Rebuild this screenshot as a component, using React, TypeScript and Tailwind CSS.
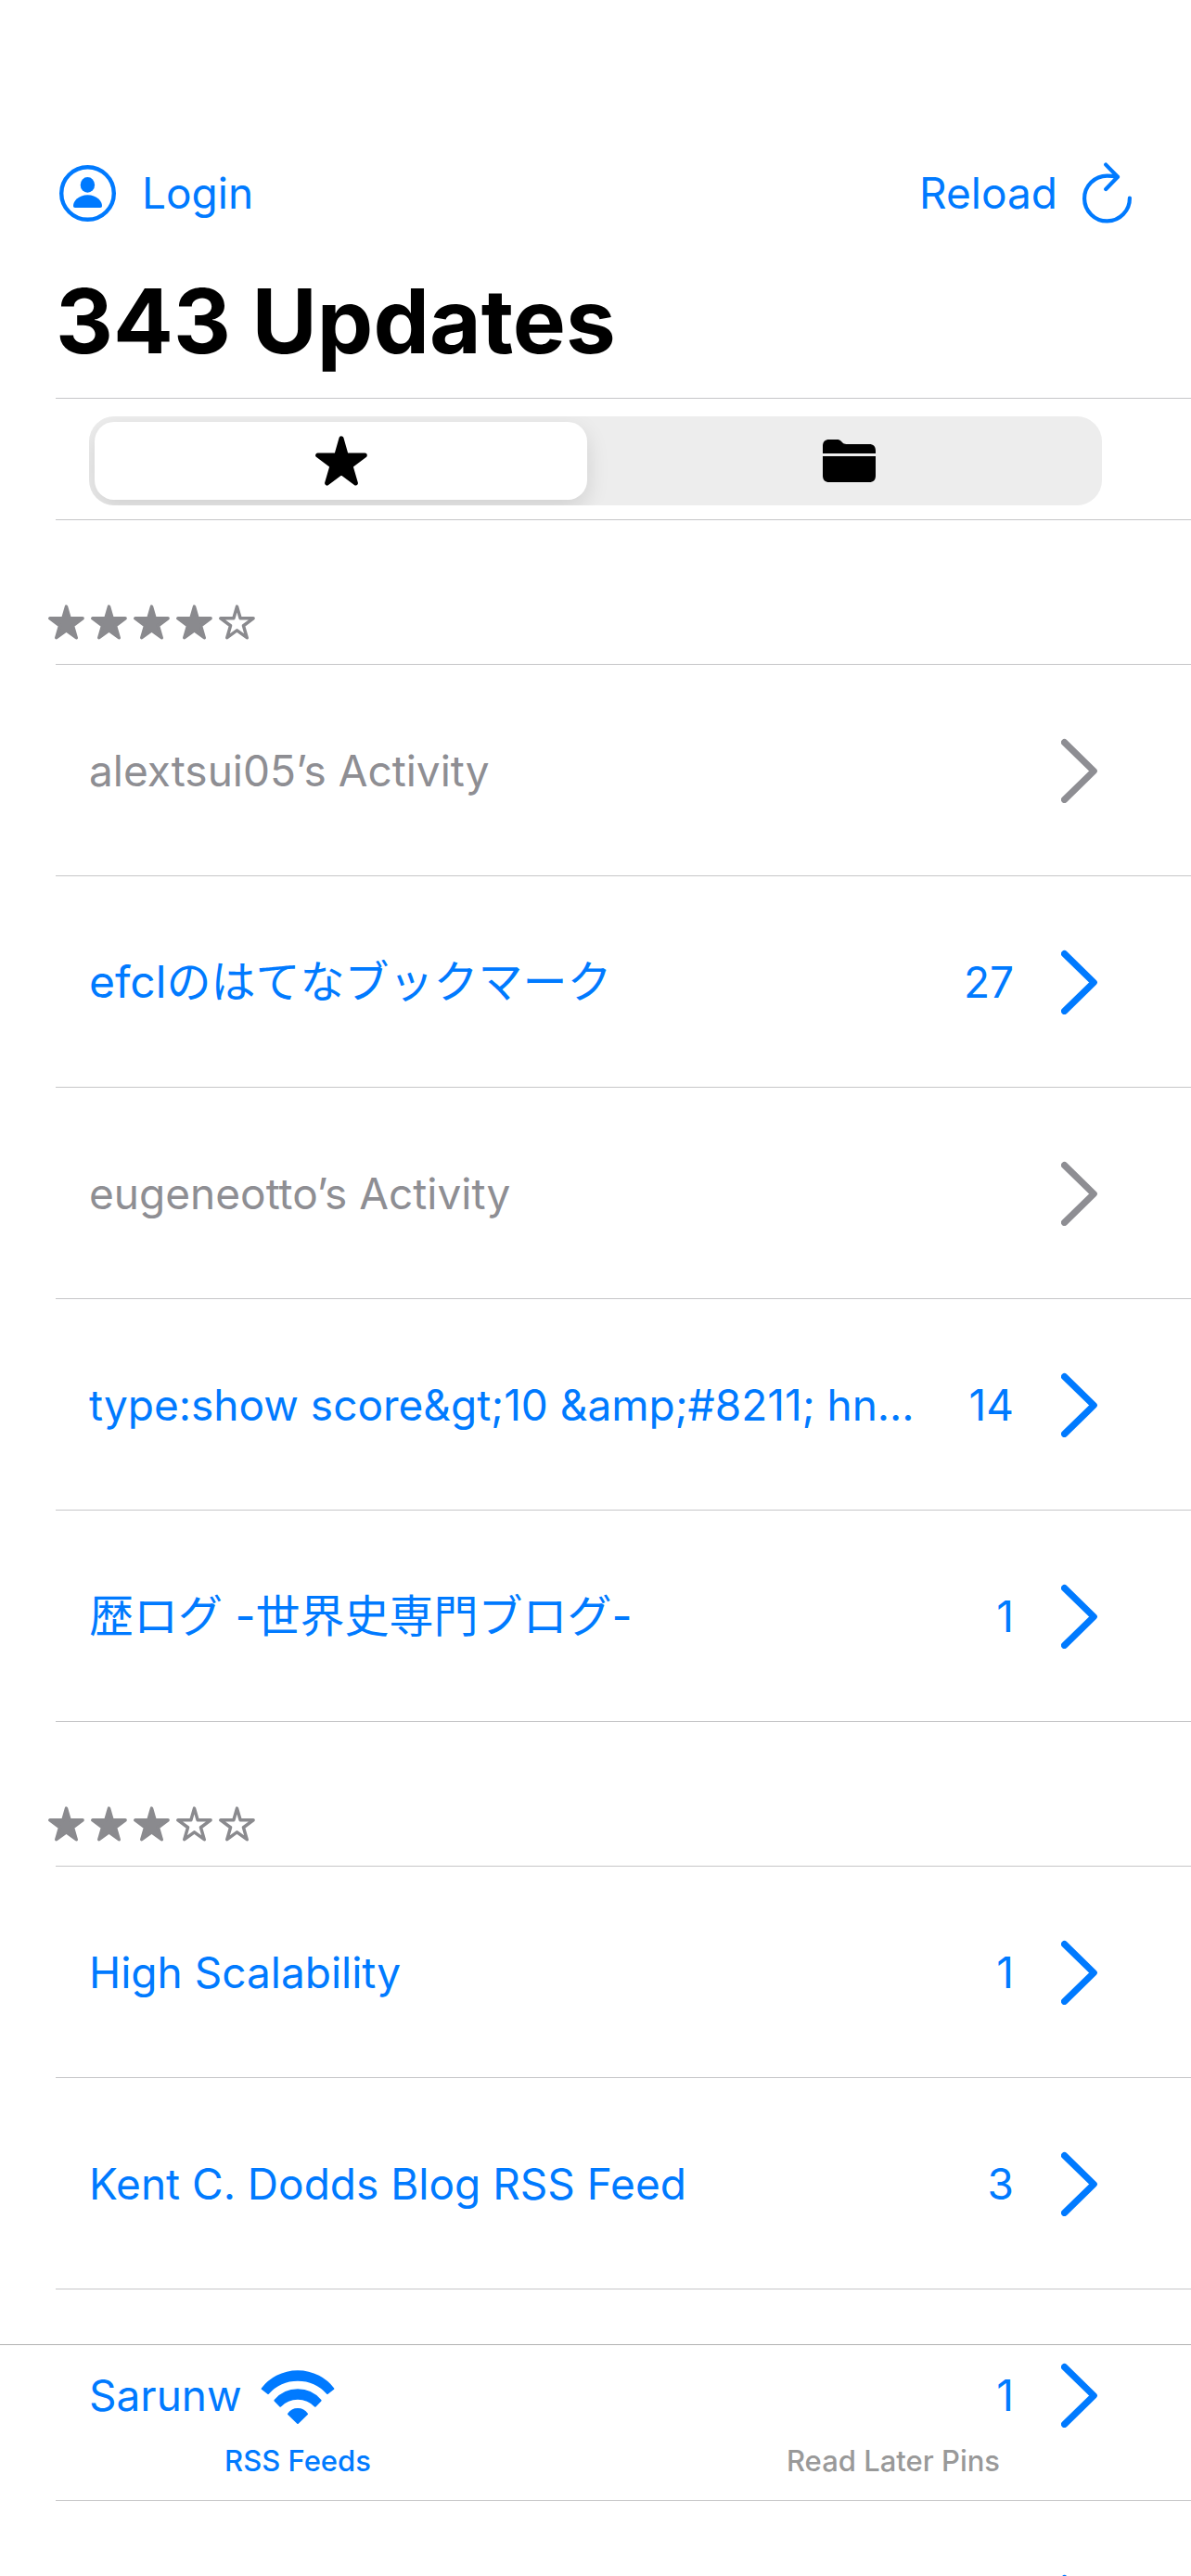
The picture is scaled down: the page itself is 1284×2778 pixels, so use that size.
type Feed = { title: string; unread?: number; lang?: string };
type Group = { rating: number; feeds: Feed[] };

const groups: Group[] = [
  {
    rating: 4,
    feeds: [
      { title: "alextsui05’s Activity" },
      { title: "efclのはてなブックマーク", unread: 27, lang: "ja" },
      { title: "eugeneotto’s Activity" },
      { title: "type:show score&gt;10 &amp;#8211; hn…", unread: 14 },
      { title: "歴ログ -世界史専門ブログ-", unread: 1, lang: "ja" },
    ],
  },
  {
    rating: 3,
    feeds: [
      { title: "High Scalability", unread: 1 },
      { title: "Kent C. Dodds Blog RSS Feed", unread: 3 },
      { title: "Sarunw", unread: 1 },
      { title: "", unread: 0 },
    ],
  },
];

function Star({ filled, className }: { filled: boolean; className: string }) {
  return (
    <svg viewBox="0 0 56 54" className={className} aria-hidden="true">
      <path
        d="M28 2.8 L33.2 21 L53.3 21 L38 32.4 L43.4 51 L28 39.6 L12.6 51 L18 32.4 L2.7 21 L22.8 21 Z"
        fill={filled ? "currentColor" : "none"}
        stroke="currentColor"
        strokeWidth="5"
        strokeLinejoin="round"
      />
    </svg>
  );
}

function PersonCircle() {
  return (
    <svg viewBox="0 0 61 61" className="size-[61px]" aria-hidden="true">
      <circle cx="30.5" cy="30.5" r="28.3" fill="none" stroke="currentColor" strokeWidth="4.4" />
      <ellipse cx="30.4" cy="21.4" rx="7.7" ry="8.4" fill="currentColor" />
      <path d="M17 46 C15.6 46 15 45.2 15 44 C15 39 20.6 32.2 30.5 32.2 C40.4 32.2 46 39 46 44 C46 45.2 45.4 46 44 46 Z" fill="currentColor" />
    </svg>
  );
}

function ReloadIcon() {
  return (
    <svg viewBox="0 0 60 68" className="h-[68px] w-[60px]" aria-hidden="true">
      <g fill="none" stroke="currentColor" strokeWidth="4.2" strokeLinecap="round" strokeLinejoin="round">
        <path d="M53.9 38.6 A24.4 24.4 0 1 1 29.5 14.6 Q35 14.6 40.5 15.9" />
        <path d="M28.2 2.6 L41 15.8 L28.2 29" />
      </g>
    </svg>
  );
}

function FolderIcon() {
  return (
    <svg viewBox="0 0 57 46" className="h-[46px] w-[57px]" aria-hidden="true">
      <path d="M0 15 V7 C0 2.4 2.4 0 7 0 H15 C17.4 0 18.6 .5 20 2 L21.5 3.6 C22.6 4.7 23.4 5 25.4 5 H50 C54.6 5 57 7.4 57 12 V15 Z" fill="currentColor" />
      <path d="M0 18 H57 V39 C57 43.6 54.6 46 50 46 H7 C2.4 46 0 43.6 0 39 Z" fill="currentColor" />
    </svg>
  );
}

function Chevron() {
  return (
    <svg viewBox="0 0 39 70" className="h-[70px] w-[39px] shrink-0" aria-hidden="true">
      <path d="M3.6 4.6 L35.2 35.5 L3.6 66.4" fill="none" stroke="currentColor" strokeWidth="7.2" strokeLinecap="round" strokeLinejoin="round" />
    </svg>
  );
}

function WifiIcon() {
  return (
    <svg viewBox="0 0 80 60" className="h-[60px] w-[80px]" aria-hidden="true">
      <g fill="currentColor" stroke="currentColor" strokeWidth="2" strokeLinejoin="round">
        <path d="M1.6 20 A48.5 48.5 0 0 1 78.4 20 L72 25 A43 43 0 0 0 8 25 Z" />
        <path d="M15.4 32.7 A32.3 32.3 0 0 1 64.6 32.7 L58.8 38.8 A26 26 0 0 0 21.2 38.8 Z" />
        <path d="M30 47.3 A12 12 0 0 1 50 47.3 L40 57 Z" />
      </g>
    </svg>
  );
}

function FeedRow({ feed }: { feed: Feed }) {
  const active = feed.unread !== undefined;
  return (
    <li className="border-b border-[#c6c6c8]">
      <a
        href="#feed"
        aria-label={feed.title || "Feed"}
        className={`flex h-[227px] items-center pl-9 pr-[101px] text-[46px] leading-[72px] ${active ? "text-[#007aff]" : "text-[#8e8e93]"}`}
      >
        <span lang={feed.lang} className={`min-w-0 flex-1 truncate ${feed.lang === "ja" ? "text-[48px]" : "text-[46px]"}`}>
          {feed.title}
        </span>
        {feed.unread ? <span className="ml-6">{feed.unread}</span> : null}
        <span className="ml-[51px]">
          <Chevron />
        </span>
      </a>
    </li>
  );
}

export default function App() {
  return (
    <div className="relative h-screen overflow-hidden bg-white font-['Inter','Noto_Sans_CJK_JP',sans-serif] text-black">
      <header className="pt-[150px]">
        <div className="flex items-center justify-between py-7 pl-16 pr-[60px] text-[#007aff]">
          <button type="button" className="flex h-[61px] items-center gap-7 text-[46px]">
            <PersonCircle />
            Login
          </button>
          <button type="button" className="flex h-[61px] items-center gap-6 text-[46px]">
            Reload
            <ReloadIcon />
          </button>
        </div>
        <h1 className="mb-1 pl-[60px] text-[96px] font-bold leading-[158px]">343 Updates</h1>
      </header>

      <main className="ml-[60px]">
        <div className="border-y border-[#c6c6c8] pb-[15px] pl-9 pr-24 pt-[19px]">
          <div className="grid h-24 grid-cols-2 rounded-[27px] bg-[#ededed]">
            <button
              type="button"
              aria-label="Favorites"
              aria-pressed="true"
              className="my-1.5 ml-1.5 mr-[9px] flex items-center justify-center rounded-[21px] bg-white shadow-[0_9px_24px_rgba(0,0,0,0.12)] [clip-path:inset(-6px_-30px_-6px_-6px_round_27px)]"
            >
              <Star filled className="h-[54px] w-[56px]" />
            </button>
            <button type="button" aria-label="Folders" aria-pressed="false" className="flex items-center justify-center">
              <FolderIcon />
            </button>
          </div>
        </div>

        {groups.map((group) => (
          <section key={group.rating}>
            <h2
              aria-label={`${group.rating} stars`}
              className="flex h-[156px] items-end border-b border-[#c6c6c8] pb-[26px] text-[#8a8a8e]"
            >
              <span className="-ml-2 flex gap-[7px]">
                {[1, 2, 3, 4, 5].map((n) => (
                  <Star key={n} filled={n <= group.rating} className="h-[38px] w-[39px]" />
                ))}
              </span>
            </h2>
            <ul>
              {group.feeds.map((feed) => (
                <FeedRow key={feed.title} feed={feed} />
              ))}
            </ul>
          </section>
        ))}
      </main>

      <nav className="absolute inset-x-0 bottom-0 grid h-[250px] grid-cols-2 border-t border-[#b2b2b2] text-[31px] font-medium leading-9">
        <a href="#feeds" aria-current="page" className="flex flex-col items-center gap-5 pt-[27px] text-[#007aff]">
          <WifiIcon />
          RSS Feeds
        </a>
        <a href="#pins" className="flex flex-col items-center pt-[107px] text-[#999999]">
          Read Later Pins
        </a>
      </nav>
    </div>
  );
}
